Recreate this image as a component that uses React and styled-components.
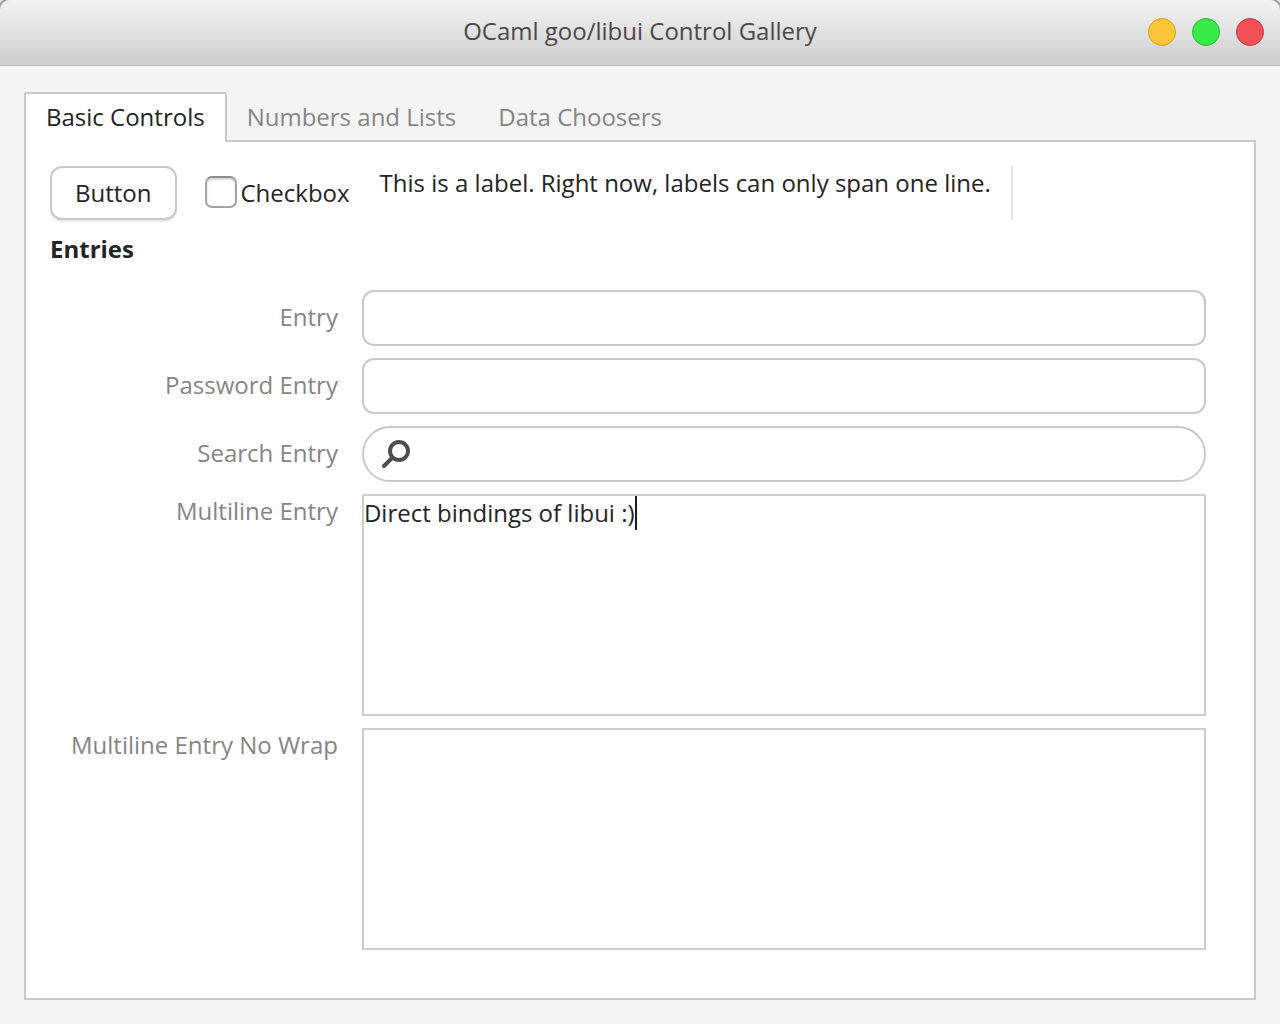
import React, { useLayoutEffect, useRef, useState } from "react";
import styled, { createGlobalStyle } from "styled-components";

const GlobalStyle = createGlobalStyle`
  *, *::before, *::after { box-sizing: border-box; }
  body {
    margin: 0;
    background: #e4e4e4;
    color: #242424;
    font: 24px/34px "Open Sans", "Noto Sans", sans-serif;
  }
  button, input, textarea { font: inherit; color: inherit; }
`;

const Window = styled.div`
  display: flex;
  flex-direction: column;
  min-height: 100vh;
`;

const TitleBar = styled.header`
  display: grid;
  grid-template-columns: 1fr auto 1fr;
  align-items: center;
  height: 66px;
  padding: 0 16px 2px;
  background: linear-gradient(#f3f3f3, #cdcdcd);
  border-radius: 10px 10px 0 0;
  box-shadow: inset 0 -1px #b9b9b9, 0 0 0 2px #a2a2a2;
`;

const Title = styled.h1`
  grid-column: 2;
  margin: 0;
  padding-bottom: 2px;
  color: #4c4848;
  font-size: 24px;
  font-weight: 400;
`;

const WindowButtons = styled.div`
  display: flex;
  justify-content: flex-end;
  gap: 16px;
`;

const WindowButton = styled.button`
  width: 28px;
  height: 28px;
  padding: 0;
  border: 1px solid ${(p) => p.$edge};
  border-radius: 50%;
  background: ${(p) => p.$fill};
`;

const Content = styled.main`
  display: flex;
  position: relative;
  flex: 1;
  flex-direction: column;
  padding: 26px 24px 24px;
  background: #f4f4f4;
`;

const TabList = styled.div`
  display: flex;
  position: relative;
  margin-bottom: -2px;
`;

const Tab = styled.button`
  height: 50px;
  padding: 0 20px 2px;
  border: 2px solid ${(p) => (p.$active ? "#c9c9c9" : "transparent")};
  border-bottom: 0;
  border-radius: 2px 2px 0 0;
  background: ${(p) => (p.$active ? "#fff" : "transparent")};
  color: ${(p) => (p.$active ? "#242424" : "#858585")};

  & + & { border-left: 0; }
`;

const Panel = styled.section`
  flex: 1;
  padding: 24px;
  border: 2px solid #c9c9c9;
  background: #fff;
`;

const ControlRow = styled.div`
  display: flex;
  align-items: stretch;
  gap: 20px;
`;

const PushButton = styled.button`
  height: 54px;
  padding: 0 23px;
  border: 2px solid #c9c9c9;
  border-radius: 12px;
  background: #fff;
  box-shadow: 0 2px #ebebeb;
`;

const CheckLabel = styled.label`
  display: flex;
  align-items: center;
  gap: 4px;
  padding: 0 10px 0 8px;
`;

const CheckBox = styled.input`
  appearance: none;
  width: 32px;
  height: 32px;
  margin: 0 0 2px;
  border: 2px solid #a4a4a4;
  border-top-color: #8f8f8f;
  border-radius: 7px;
  background: #fff;
  box-shadow: inset 0 2px 2px #d8d8d8;

  &:checked { background: #4c4c4c; }
`;

const Text = styled.p`
  margin: 0;
`;

const Separator = styled.div`
  width: 2px;
  background: #e2e2e2;
`;

const GroupTitle = styled.h2`
  margin: 12px 0 0;
  font-size: 24px;
  font-weight: 700;
`;

const Form = styled.form`
  display: grid;
  grid-template-columns: auto 1fr;
  gap: 12px 24px;
  padding: 24px 24px 24px 21px;
`;

const FieldLabel = styled.label`
  align-self: ${(p) => (p.$top ? "start" : "center")};
  padding-bottom: 2px;
  color: #858585;
  text-align: right;
`;

const Field = styled.div`
  display: grid;
  position: relative;
`;

const Entry = styled.input`
  width: 100%;
  height: 56px;
  padding: 0 ${(p) => (p.$round ? "24px 0 56px" : "14px")};
  border: 2px solid #c9c9c9;
  border-radius: ${(p) => (p.$round ? "28px" : "12px")};
  outline: 0;
  background: #fff;
  appearance: none;
`;

const SearchIcon = styled.svg`
  position: absolute;
  left: 20px;
  top: 12px;
  width: 32px;
  height: 32px;
  fill: none;
  stroke: #4e4e4e;
  stroke-width: 4;
  stroke-linecap: round;
`;

const TextArea = styled.textarea`
  width: 100%;
  height: 222px;
  padding: 0;
  border: 2px solid #cecece;
  border-radius: 0;
  outline: 0;
  background: #fff;
  caret-color: transparent;
  resize: none;
  white-space: ${(p) => (p.$noWrap ? "pre" : "pre-wrap")};
`;

const Caret = styled.span`
  position: absolute;
  top: 2px;
  width: 2px;
  height: 34px;
  background: #1c1c1c;
`;

const windowActions = [
  { name: "Minimize", fill: "#fac536", edge: "#d99e1c" },
  { name: "Maximize", fill: "#39ea49", edge: "#1fb92e" },
  { name: "Close", fill: "#f34f56", edge: "#cf2f3b" },
];

const tabs = ["Basic Controls", "Numbers and Lists", "Data Choosers"];

function CaretTextArea({ id, initial }) {
  const area = useRef(null);
  const [value, setValue] = useState(initial);
  const [left, setLeft] = useState(0);

  useLayoutEffect(() => {
    const context = document.createElement("canvas").getContext("2d");
    context.font = getComputedStyle(area.current).font;
    setLeft(Math.round(context.measureText(value).width) + 2);
  }, [value]);

  return (
    <Field>
      <TextArea
        id={id}
        ref={area}
        value={value}
        spellCheck={false}
        onChange={(e) => setValue(e.target.value)}
      />
      <Caret style={{ left }} />
    </Field>
  );
}

export default function App() {
  const [active, setActive] = useState(0);

  return (
    <>
      <GlobalStyle />
      <Window>
        <TitleBar>
          <Title>OCaml goo/libui Control Gallery</Title>
          <WindowButtons>
            {windowActions.map((a) => (
              <WindowButton key={a.name} aria-label={a.name} $fill={a.fill} $edge={a.edge} />
            ))}
          </WindowButtons>
        </TitleBar>
        <Content>
          <TabList role="tablist">
            {tabs.map((name, i) => (
              <Tab
                key={name}
                role="tab"
                aria-selected={i === active}
                $active={i === active}
                onClick={() => setActive(i)}
              >
                {name}
              </Tab>
            ))}
          </TabList>
          <Panel role="tabpanel">
            <ControlRow>
              <PushButton type="button">Button</PushButton>
              <CheckLabel>
                <CheckBox type="checkbox" />
                Checkbox
              </CheckLabel>
              <Text>This is a label. Right now, labels can only span one line.</Text>
              <Separator />
            </ControlRow>
            <GroupTitle>Entries</GroupTitle>
            <Form>
              <FieldLabel htmlFor="entry">Entry</FieldLabel>
              <Entry id="entry" type="text" />
              <FieldLabel htmlFor="password">Password Entry</FieldLabel>
              <Entry id="password" type="password" />
              <FieldLabel htmlFor="search">Search Entry</FieldLabel>
              <Field>
                <Entry id="search" type="search" $round />
                <SearchIcon viewBox="0 0 32 32" aria-hidden="true">
                  <circle cx="17" cy="13" r="9" />
                  <path d="M10.5 19.5 2 28" />
                </SearchIcon>
              </Field>
              <FieldLabel htmlFor="multiline" $top>Multiline Entry</FieldLabel>
              <CaretTextArea id="multiline" initial="Direct bindings of libui :)" />
              <FieldLabel htmlFor="nowrap" $top>Multiline Entry No Wrap</FieldLabel>
              <TextArea id="nowrap" $noWrap />
            </Form>
          </Panel>
        </Content>
      </Window>
    </>
  );
}
